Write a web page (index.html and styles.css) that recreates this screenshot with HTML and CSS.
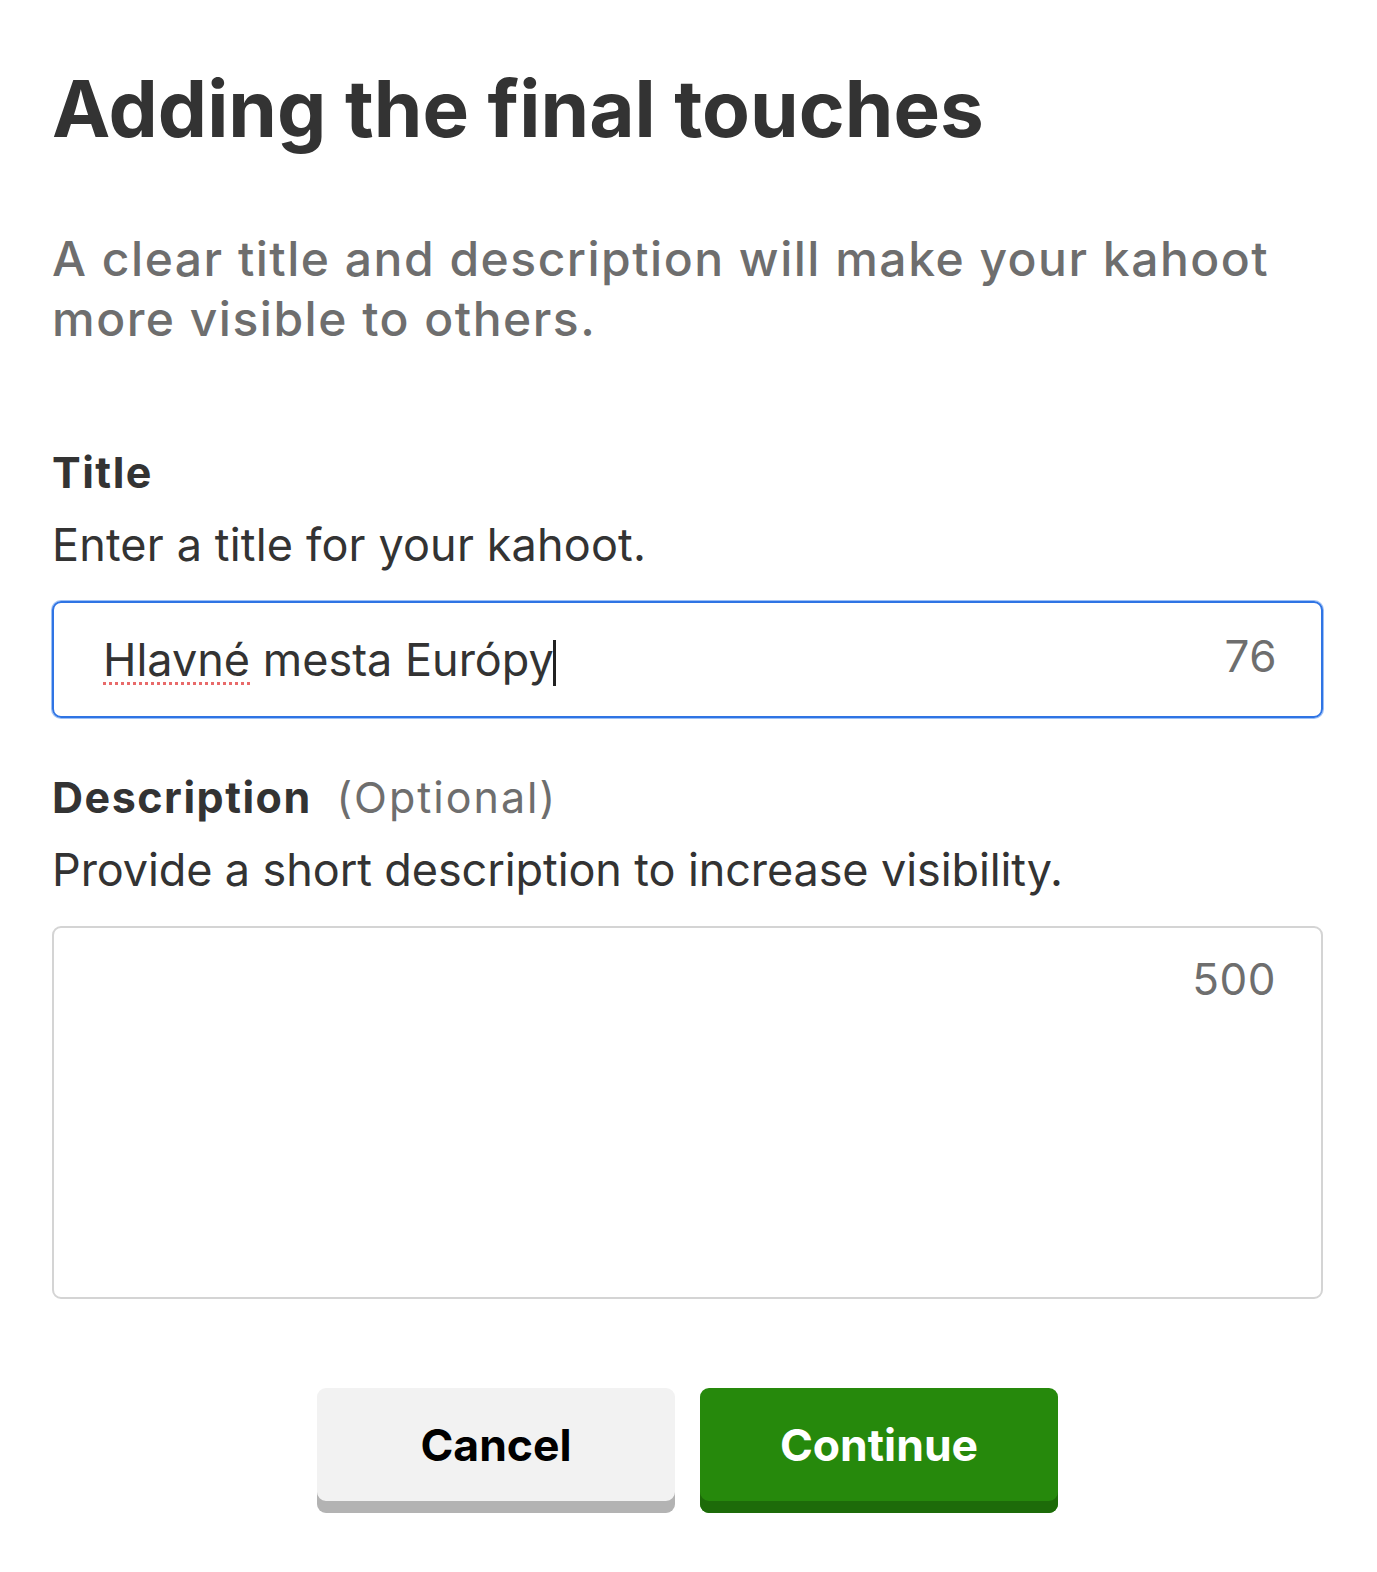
FILE: index.html
```
<!DOCTYPE html>
<html lang="en">
<head>
<meta charset="utf-8">
<title>Adding the final touches</title>
<link rel="stylesheet" href="styles.css">
</head>
<body>
<main class="dialog">
  <h1 class="heading">Adding the final touches</h1>
  <p class="intro">A clear title and description will make your kahoot more visible to others.</p>

  <section class="field field-title">
    <div class="label">Title</div>
    <div class="hint">Enter a title for your kahoot.</div>
    <div class="input focused">
      <span class="value"><span class="misspelled">Hlavné</span> mesta Európy<span class="caret"></span></span>
      <span class="counter">76</span>
    </div>
  </section>

  <section class="field field-desc">
    <div class="label">Description <span class="optional">(Optional)</span></div>
    <div class="hint hint-desc">Provide a short description to increase visibility.</div>
    <div class="textarea">
      <span class="counter">500</span>
    </div>
  </section>

  <div class="actions">
    <button class="btn btn-cancel">Cancel</button>
    <button class="btn btn-continue">Continue</button>
  </div>
</main>
</body>
</html>
```
FILE: styles.css
```
html, body {
  margin: 0;
  padding: 0;
  background: #ffffff;
}
body {
  font-family: Inter, "Noto Sans", sans-serif;
  color: #333333;
}
.dialog {
  padding: 0 54px 0 52px;
  display: flex;
  flex-direction: column;
}
.heading {
  margin: 61px 0 0;
  font-size: 78.2px;
  line-height: 96px;
  font-weight: 700;
  color: #333333;
  letter-spacing: 0;
}
.intro {
  margin: 72px 0 0;
  font-size: 48px;
  line-height: 60px;
  font-weight: 500;
  color: #6e6e6e;
  letter-spacing: 1.5px;
  max-width: 1240px;
}
.field-title {
  margin-top: 97px;
}
.field-desc {
  margin-top: 53px;
}
.label {
  font-size: 43px;
  line-height: 52px;
  font-weight: 700;
  color: #333333;
  letter-spacing: 1.5px;
}
.optional {
  font-weight: 400;
  color: #6e6e6e;
  margin-left: 13px;
  letter-spacing: 2px;
}
.hint {
  margin-top: 19px;
  font-size: 45px;
  line-height: 56px;
  font-weight: 400;
  color: #333333;
  letter-spacing: 0.15px;
}
.hint-desc {
  letter-spacing: -0.1px;
}
.input {
  margin-top: 28px;
  height: 117px;
  box-sizing: border-box;
  border: 2px solid #2f74e4;
  box-shadow: 0 0 0 1px #9dc0f6;
  border-radius: 9px;
  display: flex;
  justify-content: space-between;
  align-items: flex-start;
  padding: 0 44px 0 49px;
}
.value {
  font-size: 45px;
  line-height: 56px;
  padding-top: 29px;
  letter-spacing: 0;
  color: #333333;
  white-space: nowrap;
}
.misspelled {
  text-decoration-line: underline;
  text-decoration-style: dotted;
  text-decoration-color: #e86a6a;
  text-decoration-thickness: 3px;
  text-underline-offset: 6px;
}
.caret {
  display: inline-block;
  width: 3px;
  height: 46px;
  background: #222222;
  vertical-align: -10px;
  margin-left: -1px;
}
.counter {
  font-size: 44px;
  line-height: 52px;
  color: #6e6e6e;
  padding-top: 27px;
  letter-spacing: 0.5px;
}
.textarea {
  margin-top: 28px;
  height: 373px;
  box-sizing: border-box;
  border: 2px solid #d4d4d4;
  border-radius: 9px;
  display: flex;
  justify-content: flex-end;
  align-items: flex-start;
  padding: 0 45px 0 49px;
}
.textarea .counter {
  padding-top: 25px;
}
.actions {
  margin-top: 89px;
  display: flex;
  justify-content: center;
  gap: 25px;
}
.btn {
  width: 358px;
  height: 125px;
  box-sizing: border-box;
  border: none;
  border-radius: 9px;
  padding: 0 0 12px;
  font-family: Inter, "Noto Sans", sans-serif;
  font-size: 44.5px;
  font-weight: 700;
  letter-spacing: 0;
  cursor: pointer;
}
.btn-cancel {
  background: #f2f2f2;
  color: #000000;
  box-shadow: inset 0 -12px 0 #b3b3b3;
}
.btn-continue {
  background: #26890c;
  color: #ffffff;
  box-shadow: inset 0 -12px 0 #1d6b09;
}
```
